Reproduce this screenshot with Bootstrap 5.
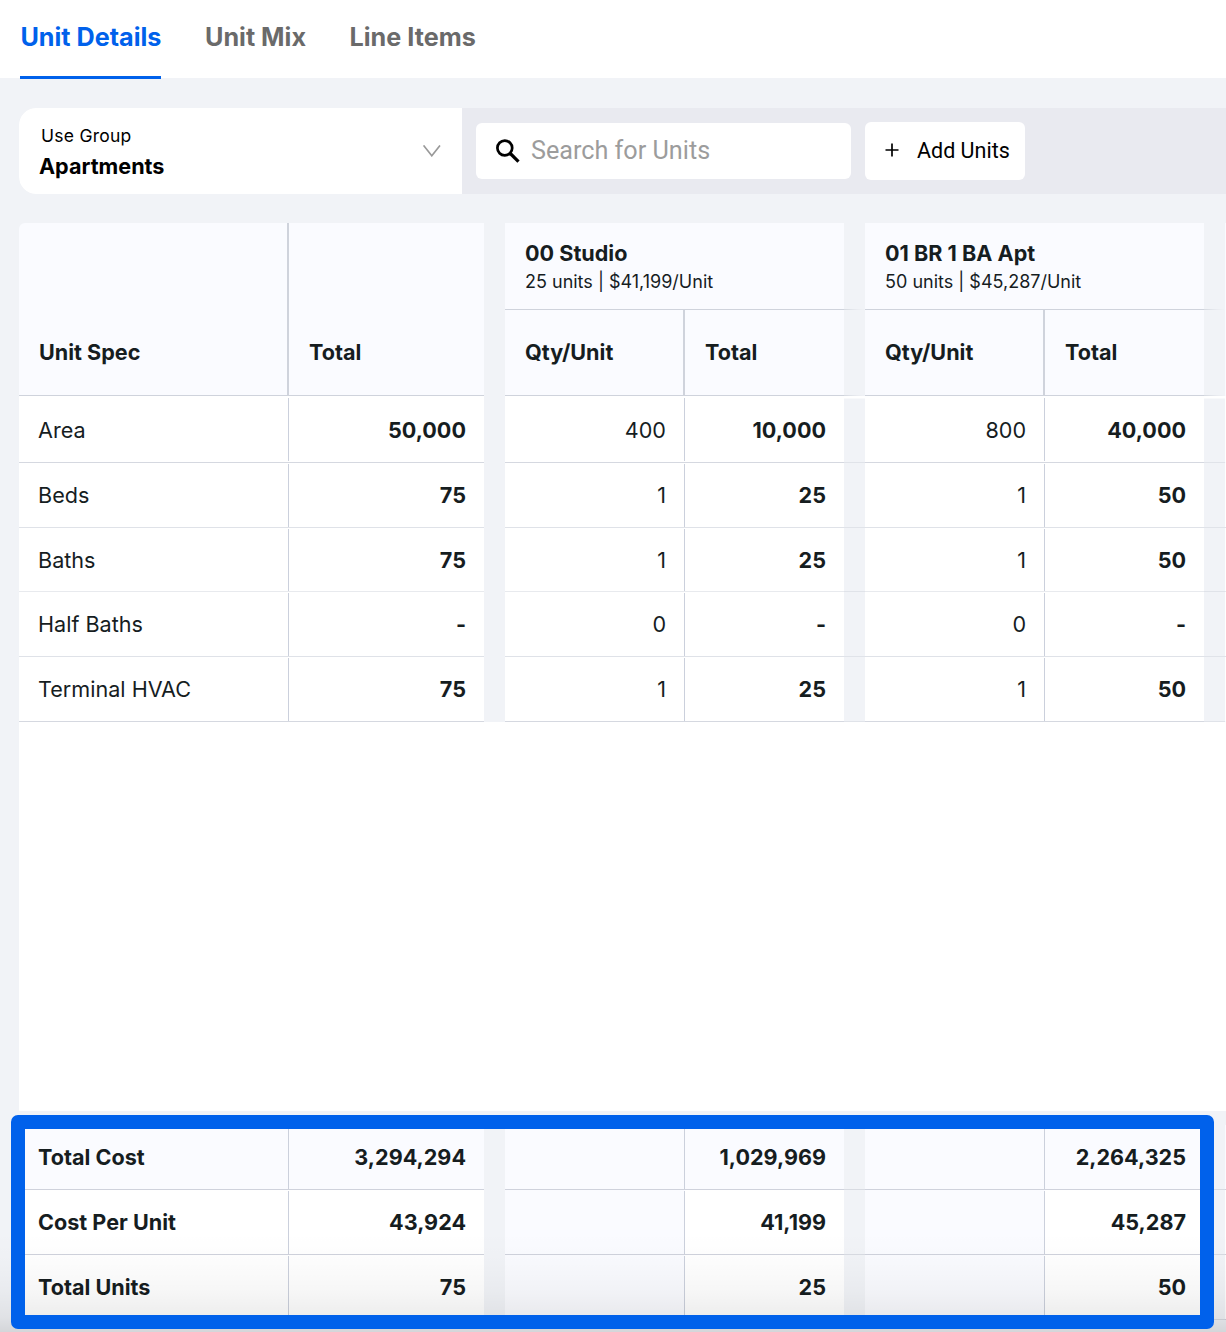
<!DOCTYPE html>
<html lang="en">
<head>
<meta charset="utf-8">
<meta name="viewport" content="width=device-width, initial-scale=1">
<title>Unit Details</title>
<link rel="stylesheet" href="https://cdn.jsdelivr.net/npm/bootstrap@5.3.0/dist/css/bootstrap.min.css">
<style>
  body { font-family: Inter, "Liberation Sans", sans-serif; background: #f1f3f7; color: #161d1f; width: 1226px; height: 1332px; overflow: hidden; }
  .tabs-bar { height: 78px; padding-left: 20.4px; gap: 43.5px; }
  .tabs-bar .nav-link { padding: 18px 0 0; height: 79px; font-size: 25.2px; line-height: 38px; font-weight: 700; color: #6a6a6a; white-space: nowrap; border-bottom: 3px solid transparent; }
  .tabs-bar .nav-link.active { color: #0061eb; border-color: #0061eb; }
  .tool-strip { margin: 30px 0 29px 19px; height: 86px; background: #e9eaf0; border-radius: 17px 0 0 17px; }
  .group-select { width: 443px; height: 86px; padding: 13px 21px 0; border-radius: 17px 0 0 17px; color: #000; }
  .group-label { font-size: 17.5px; line-height: 29px; padding-left: 1px; letter-spacing: .25px; }
  .group-value { font-size: 21.6px; line-height: 33px; font-weight: 700; margin-left: -1px; }
  .search-box { width: 375px; height: 56px; margin-left: 14px; padding-left: 20px; border-radius: 6px; }
  .search-box input { font-family: Roboto, sans-serif; font-size: 25.2px; padding: 0 0 0 10px; line-height: 38px; }
  .search-box input::placeholder { color: #9c9c9c; opacity: 1; }
  .add-btn { width: 160px; height: 58px; margin-left: 14px; padding: 0 0 0 20px; border-radius: 6px; font-family: Roboto, sans-serif; font-size: 21.5px; color: #000; background: #fff; border: 0; }
  .add-btn svg { margin-bottom: 2px; }
  .add-text { margin-left: 18px; white-space: nowrap; }
  .sheet { margin-left: 19px; width: 1207px; }
  .unit-grid { table-layout: fixed; width: 1207px; border-collapse: separate; border-spacing: 0; font-size: 21.6px; line-height: 30px; }
  .unit-grid th, .unit-grid td { padding: 0 19px; vertical-align: middle; white-space: nowrap; border-bottom: 1px solid #d5d8e0; background-color: #fff; text-align: right; }
  .unit-grid th { font-weight: 700; }
  .unit-grid .lbl { text-align: left; }
  .unit-grid tbody .lbl, .unit-grid tbody .qty { background-image: linear-gradient(#cbd0dc, #cbd0dc); background-repeat: no-repeat; background-size: 1px calc(100% - 1px); background-position: right 1px; }
  .unit-grid tbody .h67 .lbl, .unit-grid tbody .h67 .qty { background-size: 1px calc(100% - 3px); background-position: right 2px; }
  .unit-grid .sum { font-weight: 700; padding-right: 18px; }
  .unit-grid td.gut, .unit-grid th.gut { padding: 0; background: #f1f3f7; border-color: #e0e3e9; }
  .unit-grid .h67 td.gut:not(.plain) { background: linear-gradient(#fff 2px, #f1f3f7 3px); }
  .unit-grid thead th.gut:not(.plain) { border-bottom: 0; background: linear-gradient(to right, #d6dae1, #e9ebf0 60%, #f1f3f7) bottom / 100% 1px no-repeat #f1f3f7; }
  .unit-grid td.plain, .unit-grid th.plain { border-color: #f1f3f7 !important; }
  .unit-grid .edge { padding: 0; border-color: #f9faff; }
  .unit-grid thead th { background: #fafbff; text-align: left; padding-left: 20px; border-color: #cfd3dc; }
  .unit-grid thead .lbl, .unit-grid thead .qty { border-right: 2px solid #cfd3dc; }
  .unit-grid thead .low { vertical-align: bottom; padding-bottom: 28px; }
  .unit-grid thead .first { border-top-left-radius: 6px; }
  .head-a { height: 87px; } .head-b { height: 86px; }
  .unit-name { line-height: 28px; padding-top: 2px; }
  .unit-info { font-size: 18px; line-height: 28px; padding-top: 1px; margin-bottom: -1px; font-weight: 400; }
  .h64 { height: 64px; } .h65 { height: 65px; } .h67 { height: 67px; }
  .unit-grid .h67 td { padding-top: 2px; }
  .unit-grid .h64 td:not(.gut) { border-color: #e8eaee; }
  .unit-grid .beds td:not(.gut) { border-color: #dfe2e8; }
  .blank-area { height: 389px; background: #fff; }
  .totals { margin-top: 14px; }
  .unit-grid.totals td, .unit-grid.totals th { border-color: #cfd2dc; }
  .unit-grid.totals .tint, .unit-grid.totals .tinted td:not(.gut) { background-color: #fafbff; }
  .unit-grid.totals td.gut { border-color: #d8dbe2; }
  .focus-frame { left: 11px; top: 1115.3px; width: 1203px; height: 213.5px; border: 14px solid #0061eb; border-radius: 7px; z-index: 3; }
  .bottom-fade { left: 0; right: 0; top: 1232px; height: 100px; z-index: 2; pointer-events: none; background: linear-gradient(to bottom, rgba(0,0,0,0), rgba(0,0,0,.012) 30%, rgba(0,0,0,.035) 60%, rgba(0,0,0,.07) 85%, rgba(0,0,0,.12)); }
</style>
</head>
<body class="position-relative">
<nav class="nav tabs-bar bg-white flex-nowrap">
  <a class="nav-link active" href="#">Unit Details</a>
  <a class="nav-link" href="#">Unit Mix</a>
  <a class="nav-link" href="#">Line Items</a>
</nav>
<div class="tool-strip d-flex align-items-center">
  <div class="group-select bg-white d-flex justify-content-between">
    <div>
      <div class="group-label">Use Group</div>
      <div class="group-value">Apartments</div>
    </div>
    <svg class="mt-4" width="18" height="12" viewBox="0 0 18 12" fill="none" stroke="#999" stroke-width="1.6"><path d="M.6 .4 8.8 10.8 17 .4"/></svg>
  </div>
  <div class="search-box bg-white d-flex align-items-center">
    <svg class="flex-shrink-0" width="25" height="25" viewBox="0 0 25 25" fill="none" stroke="#000"><circle cx="8.8" cy="9" r="7.4" stroke-width="2.7"/><path d="m14.3 14.5 8.2 8.2" stroke-width="3.2"/></svg>
    <input class="form-control border-0 shadow-none bg-transparent" type="text" placeholder="Search for Units">
  </div>
  <button class="btn add-btn d-flex align-items-center" type="button">
    <svg width="14" height="14" viewBox="0 0 14 14" stroke="#000" stroke-width="1.7"><path d="M7 .5v13M.5 7h13"/></svg>
    <span class="add-text">Add Units</span>
  </button>
</div>
<main class="sheet">
  <table class="unit-grid">
    <colgroup><col style="width:270px"><col style="width:195px"><col style="width:21px"><col style="width:180px"><col style="width:159px"><col style="width:21px"><col style="width:180px"><col style="width:159px"><col style="width:21px"><col style="width:1px"></colgroup>
    <thead>
      <tr class="head-a">
        <th rowspan="2" class="lbl low first">Unit Spec</th><th rowspan="2" class="low">Total</th><th rowspan="2" class="gut plain"></th>
        <th colspan="2"><div class="unit-name">00 Studio</div><div class="unit-info">25 units | $41,199/Unit</div></th><th class="gut"></th>
        <th colspan="2"><div class="unit-name">01 BR 1 BA Apt</div><div class="unit-info">50 units | $45,287/Unit</div></th><th class="gut"></th><th class="edge"></th>
      </tr>
      <tr class="head-b">
        <th class="qty low">Qty/Unit</th><th class="low">Total</th><th class="gut"></th>
        <th class="qty low">Qty/Unit</th><th class="low">Total</th><th class="gut"></th><th class="edge"></th>
      </tr>
    </thead>
    <tbody>
      <tr class="h67"><td class="lbl">Area</td><td class="sum">50,000</td><td class="gut plain"></td><td class="qty">400</td><td class="sum">10,000</td><td class="gut"></td><td class="qty">800</td><td class="sum">40,000</td><td class="gut"></td><td class="edge"></td></tr>
      <tr class="h65 beds"><td class="lbl">Beds</td><td class="sum">75</td><td class="gut plain"></td><td class="qty">1</td><td class="sum">25</td><td class="gut"></td><td class="qty">1</td><td class="sum">50</td><td class="gut"></td><td class="edge"></td></tr>
      <tr class="h64"><td class="lbl">Baths</td><td class="sum">75</td><td class="gut plain"></td><td class="qty">1</td><td class="sum">25</td><td class="gut"></td><td class="qty">1</td><td class="sum">50</td><td class="gut"></td><td class="edge"></td></tr>
      <tr class="h65 beds"><td class="lbl">Half Baths</td><td class="sum">-</td><td class="gut plain"></td><td class="qty">0</td><td class="sum">-</td><td class="gut"></td><td class="qty">0</td><td class="sum">-</td><td class="gut"></td><td class="edge"></td></tr>
      <tr class="h65"><td class="lbl">Terminal HVAC</td><td class="sum">75</td><td class="gut plain"></td><td class="qty">1</td><td class="sum">25</td><td class="gut"></td><td class="qty">1</td><td class="sum">50</td><td class="gut"></td><td class="edge"></td></tr>
    </tbody>
  </table>
  <div class="blank-area"></div>
  <table class="unit-grid totals">
    <colgroup><col style="width:270px"><col style="width:195px"><col style="width:21px"><col style="width:180px"><col style="width:159px"><col style="width:21px"><col style="width:180px"><col style="width:159px"><col style="width:21px"><col style="width:1px"></colgroup>
    <tbody>
      <tr class="h65 tinted"><th class="lbl tint">Total Cost</th><td class="sum">3,294,294</td><td class="gut plain"></td><td class="qty"></td><td class="sum">1,029,969</td><td class="gut"></td><td class="qty"></td><td class="sum">2,264,325</td><td class="gut"></td><td class="edge"></td></tr>
      <tr class="h65"><th class="lbl">Cost Per Unit</th><td class="sum">43,924</td><td class="gut plain"></td><td class="qty tint"></td><td class="sum">41,199</td><td class="gut"></td><td class="qty tint"></td><td class="sum">45,287</td><td class="gut"></td><td class="edge"></td></tr>
      <tr class="h65"><th class="lbl">Total Units</th><td class="sum">75</td><td class="gut plain"></td><td class="qty tint"></td><td class="sum">25</td><td class="gut"></td><td class="qty tint"></td><td class="sum">50</td><td class="gut"></td><td class="edge"></td></tr>
    </tbody>
  </table>
</main>
<div class="bottom-fade position-absolute"></div>
<div class="focus-frame position-absolute"></div>
<script src="https://cdn.jsdelivr.net/npm/bootstrap@5.3.0/dist/js/bootstrap.bundle.min.js"></script>
</body>
</html>
